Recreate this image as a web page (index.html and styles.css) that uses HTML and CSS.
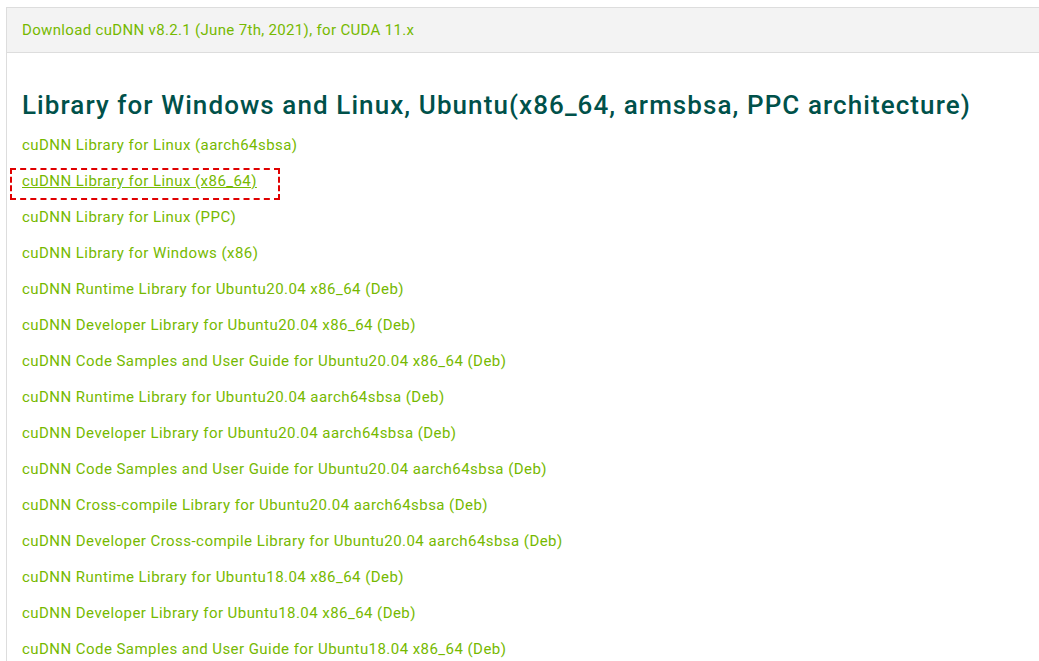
FILE: index.html
```html
<!DOCTYPE html>
<html lang="en">
<head>
<meta charset="utf-8">
<title>cuDNN Download</title>
<link rel="stylesheet" href="styles.css">
</head>
<body>
<div class="panel">
  <div class="panel-head">
    <a class="link head-link" href="#">Download cuDNN v8.2.1 (June 7th, 2021), for CUDA 11.x</a>
  </div>
  <div class="panel-body">
    <h2 class="title">Library for Windows and Linux, Ubuntu(x86_64, armsbsa, PPC architecture)</h2>
    <ul class="list">
      <li><a class="link" href="#">cuDNN Library for Linux (aarch64sbsa)</a></li>
      <li class="marked"><a class="link underline" href="#">cuDNN Library for Linux (x86_64)</a><span class="mark"></span></li>
      <li><a class="link" href="#">cuDNN Library for Linux (PPC)</a></li>
      <li><a class="link" href="#">cuDNN Library for Windows (x86)</a></li>
      <li><a class="link" href="#">cuDNN Runtime Library for Ubuntu20.04 x86_64 (Deb)</a></li>
      <li><a class="link" href="#">cuDNN Developer Library for Ubuntu20.04 x86_64 (Deb)</a></li>
      <li><a class="link" href="#">cuDNN Code Samples and User Guide for Ubuntu20.04 x86_64 (Deb)</a></li>
      <li><a class="link" href="#">cuDNN Runtime Library for Ubuntu20.04 aarch64sbsa (Deb)</a></li>
      <li><a class="link" href="#">cuDNN Developer Library for Ubuntu20.04 aarch64sbsa (Deb)</a></li>
      <li><a class="link" href="#">cuDNN Code Samples and User Guide for Ubuntu20.04 aarch64sbsa (Deb)</a></li>
      <li><a class="link" href="#">cuDNN Cross-compile Library for Ubuntu20.04 aarch64sbsa (Deb)</a></li>
      <li><a class="link" href="#">cuDNN Developer Cross-compile Library for Ubuntu20.04 aarch64sbsa (Deb)</a></li>
      <li><a class="link" href="#">cuDNN Runtime Library for Ubuntu18.04 x86_64 (Deb)</a></li>
      <li><a class="link" href="#">cuDNN Developer Library for Ubuntu18.04 x86_64 (Deb)</a></li>
      <li><a class="link" href="#">cuDNN Code Samples and User Guide for Ubuntu18.04 x86_64 (Deb)</a></li>
    </ul>
  </div>
</div>
</body>
</html>
```

FILE: styles.css
```css
html, body {
  margin: 0;
  padding: 0;
  background: #ffffff;
  overflow: hidden;
}

body {
  font-family: Roboto, "Liberation Sans", sans-serif;
  font-size: 15px;
}

.panel {
  margin: 7px 0 0 6px;
  border-top: 1px solid #dddddd;
  border-left: 1px solid #dddddd;
  min-height: 700px;
}

.panel-head {
  height: 44px;
  display: flex;
  align-items: center;
  padding-left: 15px;
  background: #f3f3f3;
  border-bottom: 1px solid #dddddd;
}

.panel-body {
  padding: 36px 0 0 15px;
}

.title {
  margin: 0 0 6px 0;
  font-size: 26px;
  line-height: 32px;
  font-weight: 500;
  color: #00514a;
  letter-spacing: 1.08px;
  white-space: nowrap;
}

.list {
  list-style: none;
  margin: 0;
  padding: 0;
}

.list li {
  height: 36px;
  line-height: 36px;
  position: relative;
}

.link {
  color: #76b900;
  text-decoration: none;
  font-size: 15px;
  letter-spacing: 0.45px;
}

.head-link {
  letter-spacing: 0.33px;
}

.underline {
  text-decoration: underline;
}

.mark {
  position: absolute;
  left: -12px;
  top: 5px;
  width: 266px;
  height: 28px;
  border: 2px dashed #e00000;
}
```
